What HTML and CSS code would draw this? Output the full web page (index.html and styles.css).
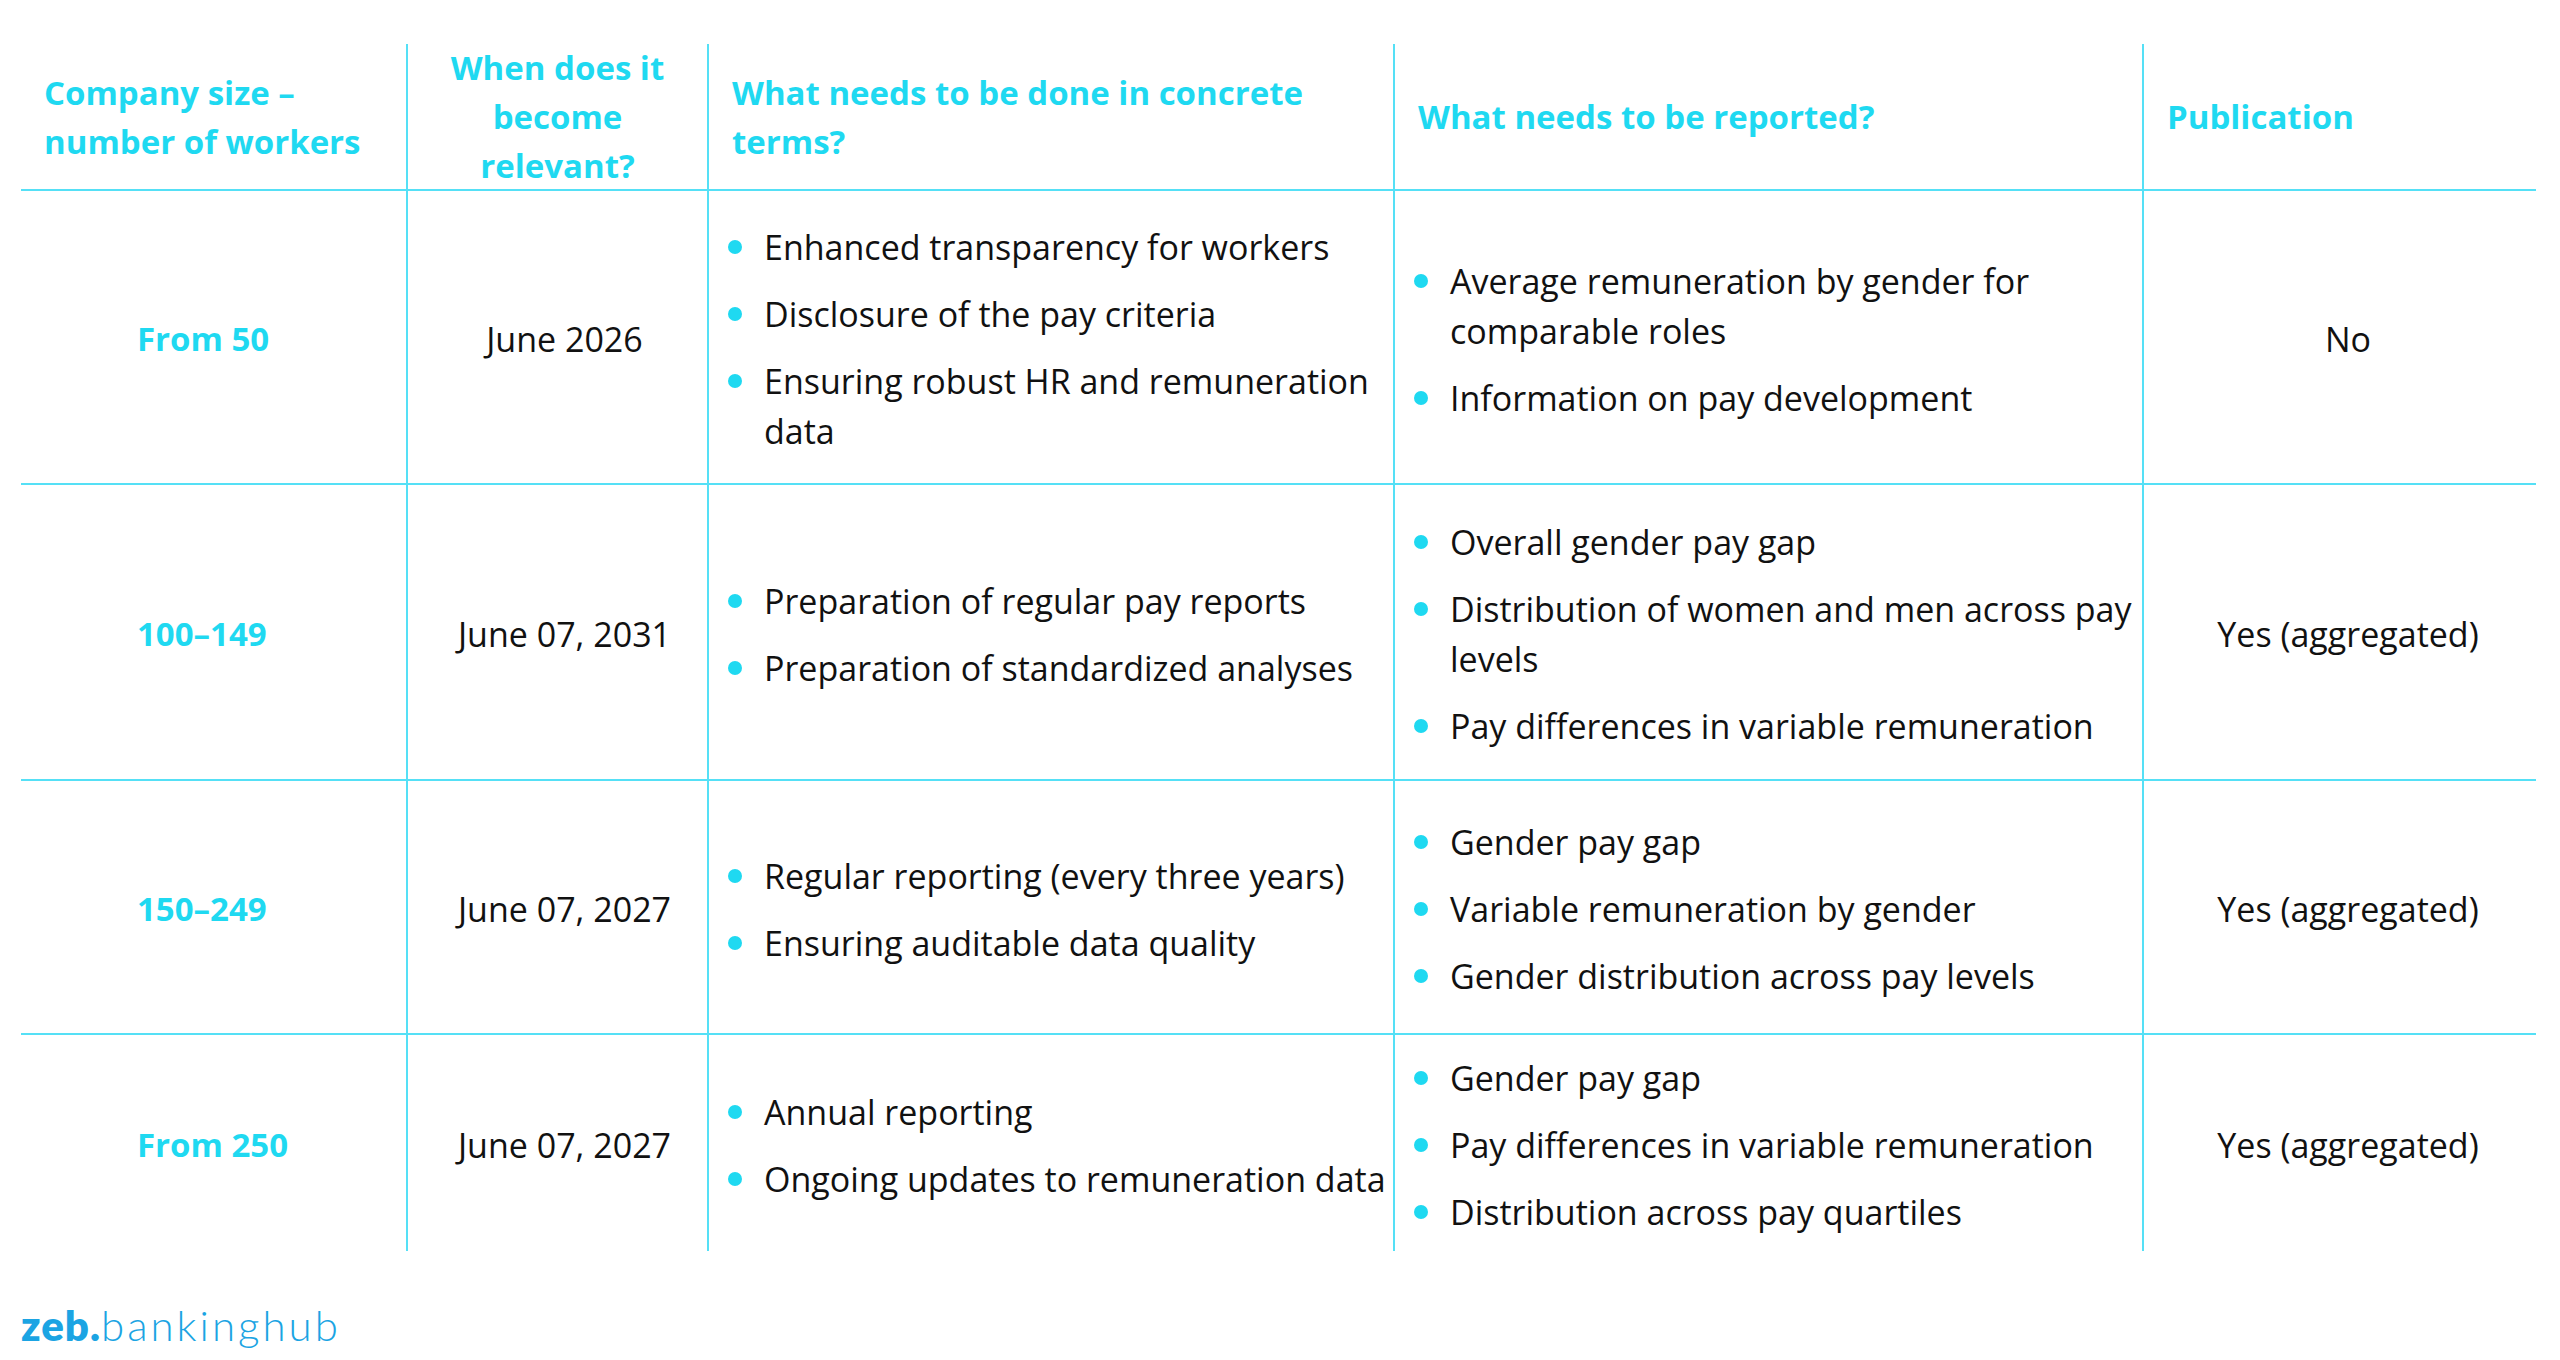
FILE: index.html
```html
<!DOCTYPE html>
<html lang="en">
<head>
<meta charset="utf-8">
<title>Pay transparency reporting obligations</title>
<link rel="stylesheet" href="styles.css">
</head>
<body>
<main class="page">
  <div class="table">
    <div class="cell head c1 row-line"><span>Company size –<br>number of workers</span></div>
    <div class="cell head c2 col-line row-line center"><span>When does it<br>become<br>relevant?</span></div>
    <div class="cell head c3 col-line row-line"><span>What needs to be done in concrete<br>terms?</span></div>
    <div class="cell head c4 col-line row-line"><span>What needs to be reported?</span></div>
    <div class="cell head c5 col-line row-line"><span>Publication</span></div>

    <div class="cell body size row-line">From 50</div>
    <div class="cell body date col-line row-line">June 2026</div>
    <div class="cell body list col-line row-line">
      <ul>
        <li>Enhanced transparency for workers</li>
        <li>Disclosure of the pay criteria</li>
        <li>Ensuring robust HR and remuneration<br>data</li>
      </ul>
    </div>
    <div class="cell body list col-line row-line">
      <ul>
        <li>Average remuneration by gender for<br>comparable roles</li>
        <li>Information on pay development</li>
      </ul>
    </div>
    <div class="cell body pub col-line row-line">No</div>

    <div class="cell body size row-line">100–149</div>
    <div class="cell body date col-line row-line">June 07, 2031</div>
    <div class="cell body list col-line row-line">
      <ul>
        <li>Preparation of regular pay reports</li>
        <li>Preparation of standardized analyses</li>
      </ul>
    </div>
    <div class="cell body list col-line row-line">
      <ul>
        <li>Overall gender pay gap</li>
        <li>Distribution of women and men across pay<br>levels</li>
        <li>Pay differences in variable remuneration</li>
      </ul>
    </div>
    <div class="cell body pub col-line row-line">Yes (aggregated)</div>

    <div class="cell body size row-line">150–249</div>
    <div class="cell body date col-line row-line">June 07, 2027</div>
    <div class="cell body list col-line row-line">
      <ul>
        <li>Regular reporting (every three years)</li>
        <li>Ensuring auditable data quality</li>
      </ul>
    </div>
    <div class="cell body list col-line row-line">
      <ul>
        <li>Gender pay gap</li>
        <li>Variable remuneration by gender</li>
        <li>Gender distribution across pay levels</li>
      </ul>
    </div>
    <div class="cell body pub col-line row-line">Yes (aggregated)</div>

    <div class="cell body size">From 250</div>
    <div class="cell body date col-line">June 07, 2027</div>
    <div class="cell body list col-line">
      <ul>
        <li>Annual reporting</li>
        <li>Ongoing updates to remuneration data</li>
      </ul>
    </div>
    <div class="cell body list col-line">
      <ul>
        <li>Gender pay gap</li>
        <li>Pay differences in variable remuneration</li>
        <li>Distribution across pay quartiles</li>
      </ul>
    </div>
    <div class="cell body pub col-line">Yes (aggregated)</div>
  </div>

  <footer class="logo"><span class="logo-zeb">zeb.</span><span class="logo-hub">bankinghub</span></footer>
</main>
</body>
</html>
```

FILE: styles.css
```css
* { box-sizing: border-box; }

html, body {
  margin: 0;
  padding: 0;
  background: #ffffff;
}

body {
  font-family: "Open Sans", "Noto Sans", "Liberation Sans", sans-serif;
  color: #111111;
  width: 2560px;
  height: 1360px;
  overflow: hidden;
}

.page {
  padding: 44px 24px 0 21px;
}

.table {
  display: grid;
  grid-template-columns: 385px 301px 686px 749px 394px;
  grid-template-rows: 147px 294px 296px 254px 216px;
  width: 2515px;
}

.cell {
  display: flex;
  align-items: center;
  font-size: 34px;
  line-height: 50px;
}

.body {
  padding-top: 4px;
}

.col-line { border-left: 2px solid #55e0f6; }
.row-line { border-bottom: 2px solid #55e0f6; }

.head {
  color: #1fd9f1;
  font-weight: 700;
  font-size: 33px;
  line-height: 49px;
  padding-left: 23px;
  padding-right: 4px;
}

.head.center {
  justify-content: center;
  text-align: center;
  padding-left: 0;
  padding-right: 0;
}

.size {
  color: #1fd9f1;
  font-weight: 700;
  font-size: 33px;
  padding-left: 116px;
}

.date {
  justify-content: center;
  padding-left: 14px;
}

.pub {
  justify-content: center;
  padding-left: 16px;
}

.list ul {
  list-style: none;
  margin: 0;
  padding: 0;
  display: flex;
  flex-direction: column;
  gap: 17px;
}

.list li {
  position: relative;
  padding-left: 55px;
  white-space: nowrap;
}

.list li::before {
  content: "";
  position: absolute;
  left: 19px;
  top: 18px;
  width: 14px;
  height: 14px;
  border-radius: 50%;
  background: #1fd9f1;
}

.logo {
  margin-top: 50px;
  font-family: "Lato", "Open Sans", sans-serif;
  font-size: 42px;
  line-height: 48px;
  color: #1ba4e3;
}

.logo-zeb {
  font-weight: 800;
  letter-spacing: 1px;
}

.logo-hub {
  font-weight: 300;
  letter-spacing: 3px;
}
```
